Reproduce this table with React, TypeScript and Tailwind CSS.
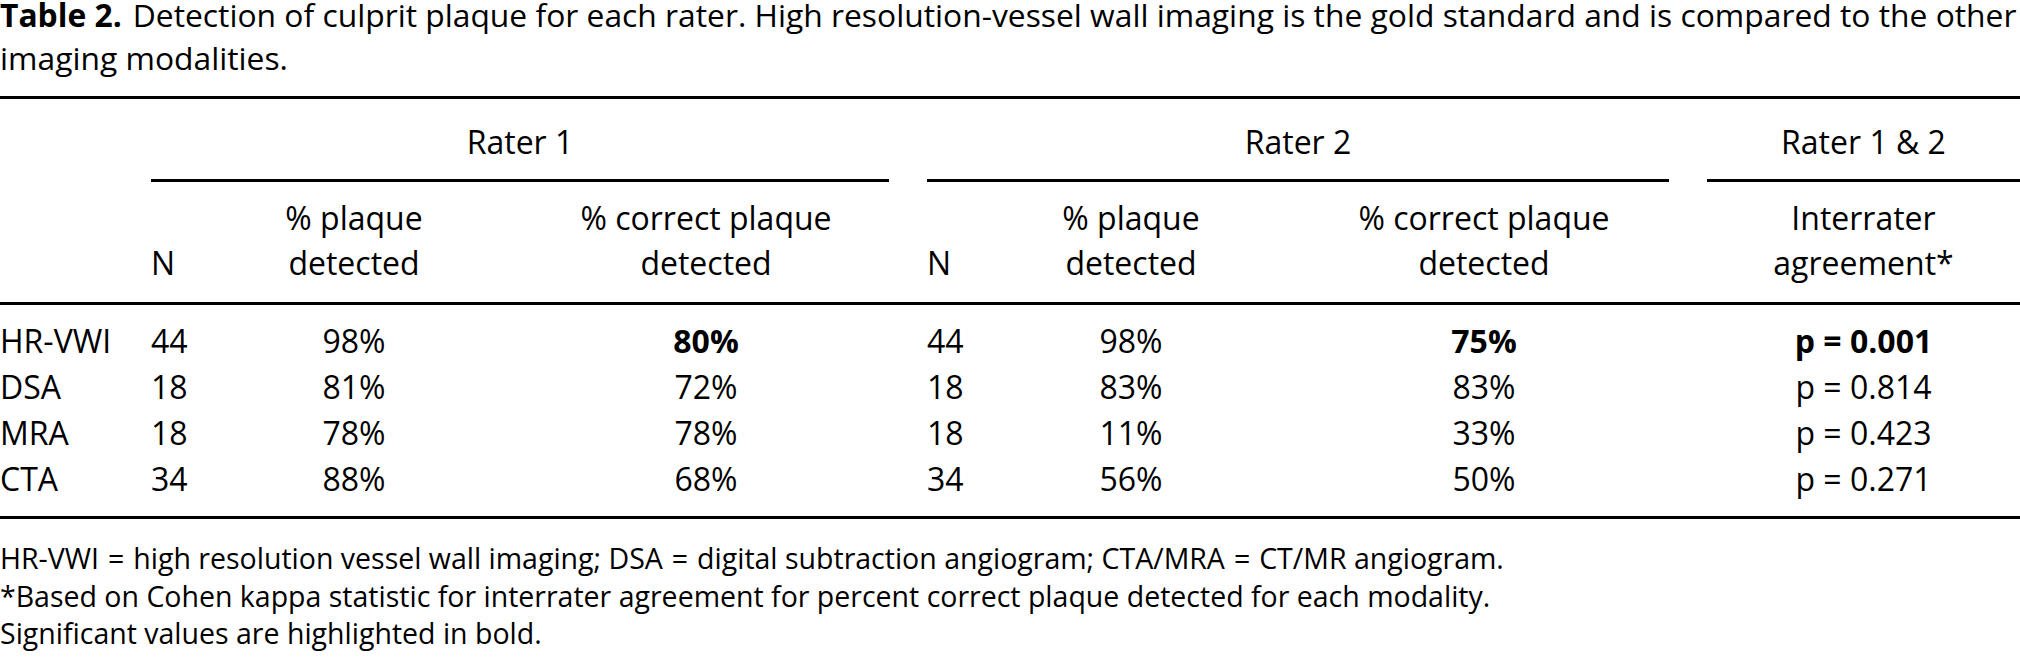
import React from "react";

const cols =
  "grid grid-cols-[151px_100px_206px_66px_366px_38px_100px_208px_64px_370px_38px_313px]";

type Row = {
  name: string;
  n1: string;
  p1: string;
  c1: string;
  n2: string;
  p2: string;
  c2: string;
  p: string;
  bold?: boolean;
};

const rows: Row[] = [
  { name: "HR-VWI", n1: "44", p1: "98%", c1: "80%", n2: "44", p2: "98%", c2: "75%", p: "p = 0.001", bold: true },
  { name: "DSA", n1: "18", p1: "81%", c1: "72%", n2: "18", p2: "83%", c2: "83%", p: "p = 0.814" },
  { name: "MRA", n1: "18", p1: "78%", c1: "78%", n2: "18", p2: "11%", c2: "33%", p: "p = 0.423" },
  { name: "CTA", n1: "34", p1: "88%", c1: "68%", n2: "34", p2: "56%", c2: "50%", p: "p = 0.271" },
];

function Eq() {
  return <span className="mx-[9px]">=</span>;
}

export default function App() {
  return (
    <div className="w-[2020px] h-[658px] overflow-hidden bg-white text-black font-['Open_Sans',sans-serif]">
      {/* Caption */}
      <div className="text-[31.8px] whitespace-nowrap">
        <div className="leading-[29px]">
          <span className="font-bold">Table 2.</span>
          <span className="ml-[11px]">
            Detection of culprit plaque for each rater. High resolution-vessel wall imaging is the gold standard and is compared to the other
          </span>
        </div>
        <div className="leading-[57px]">imaging modalities.</div>
      </div>

      {/* Top rule */}
      <div className="mt-[10px] h-[3px] bg-black" />

      <div className="text-[32px] leading-[45px]">
        {/* Header row 1 */}
        <div className={cols}>
          <div className="col-start-2 col-span-4 pt-[20px] pb-[15px] border-b-[3px] border-black text-center">
            Rater 1
          </div>
          <div className="col-start-7 col-span-4 pt-[20px] pb-[15px] border-b-[3px] border-black text-center">
            Rater 2
          </div>
          <div className="col-start-12 pt-[20px] pb-[15px] border-b-[3px] border-black text-center">
            Rater 1 &amp; 2
          </div>
        </div>

        {/* Header row 2 */}
        <div className={`${cols} pt-[13px] pb-[17px]`}>
          <div className="col-start-2 self-end">N</div>
          <div className="col-start-3 text-center">
            % plaque
            <br />
            detected
          </div>
          <div className="col-start-5 text-center">
            % correct plaque
            <br />
            detected
          </div>
          <div className="col-start-7 self-end">N</div>
          <div className="col-start-8 text-center">
            % plaque
            <br />
            detected
          </div>
          <div className="col-start-10 text-center">
            % correct plaque
            <br />
            detected
          </div>
          <div className="col-start-12 text-center">
            Interrater
            <br />
            agreement*
          </div>
        </div>

        {/* Header bottom rule */}
        <div className="h-[3px] bg-black" />

        {/* Body */}
        <div className="pt-[13px] pb-[14px] leading-[46px]">
          {rows.map((r) => (
            <div key={r.name} className={cols}>
              <div className="col-start-1">{r.name}</div>
              <div className="col-start-2">{r.n1}</div>
              <div className="col-start-3 text-center">{r.p1}</div>
              <div className={`col-start-5 text-center ${r.bold ? "font-bold" : ""}`}>{r.c1}</div>
              <div className="col-start-7">{r.n2}</div>
              <div className="col-start-8 text-center">{r.p2}</div>
              <div className={`col-start-10 text-center ${r.bold ? "font-bold" : ""}`}>{r.c2}</div>
              <div className={`col-start-12 text-center ${r.bold ? "font-bold" : ""}`}>{r.p}</div>
            </div>
          ))}
        </div>

        {/* Bottom rule */}
        <div className="h-[3px] bg-black" />
      </div>

      {/* Footnotes */}
      <div className="mt-[21px] text-[28.5px] leading-[37.5px] whitespace-nowrap">
        <div>
          HR-VWI<Eq />high resolution vessel wall imaging; DSA<Eq />digital subtraction angiogram; CTA/MRA<Eq />CT/MR angiogram.
        </div>
        <div>*Based on Cohen kappa statistic for interrater agreement for percent correct plaque detected for each modality.</div>
        <div>Significant values are highlighted in bold.</div>
      </div>
    </div>
  );
}
